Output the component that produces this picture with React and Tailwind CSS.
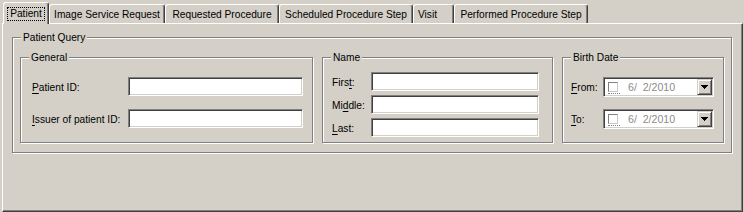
import React from "react";

function Group({ title, className, children }) {
  return (
    <div
      className={
        "relative border border-[#808080] shadow-[1px_1px_0_#ffffff,inset_1px_1px_0_#ffffff] " +
        className
      }
    >
      <span className="absolute left-[8px] top-[-6px] bg-[#d4d0c8] px-[2px] leading-[12px] whitespace-nowrap">
        {title}
      </span>
      {children}
    </div>
  );
}

function TextBox({ className }) {
  return (
    <div
      className={
        "bg-white border border-t-[#808080] border-l-[#808080] border-r-white border-b-white shadow-[inset_1px_1px_0_#404040,inset_-1px_-1px_0_#d4d0c8] " +
        className
      }
    />
  );
}

function Label({ pre, u, post }) {
  return (
    <span className="whitespace-nowrap leading-[12px] pt-[2px]">
      {pre}
      <span className="underline underline-offset-[2px]">{u}</span>
      {post}
    </span>
  );
}

function DatePicker() {
  return (
    <div className="h-[20px] w-[111px] bg-white border border-t-[#808080] border-l-[#808080] border-r-white border-b-white shadow-[inset_1px_1px_0_#404040,inset_-1px_-1px_0_#d4d0c8] flex items-center pl-[4px] pr-[1px] py-[1px]">
      <div className="flex flex-col items-start mt-[1px]">
        <div className="w-[10px] h-[10px] border border-t-[#808080] border-l-[#808080] border-r-[#c8c8c8] border-b-[#c8c8c8]" />
        <div className="w-[12px] h-0 border-b border-dotted border-[#808080] mt-[1px]" />
      </div>
      <span className="ml-[8px] text-[#8c8c8c] whitespace-pre leading-[12px] text-[10.6px]">{"6/  2/2010"}</span>
      <div className="ml-auto h-[16px] w-[15px] bg-[#d4d0c8] border border-t-[#d4d0c8] border-l-[#d4d0c8] border-r-[#404040] border-b-[#404040] shadow-[inset_1px_1px_0_#ffffff,inset_-1px_-1px_0_#808080] flex items-center justify-center">
        <svg width="7" height="4" viewBox="0 0 7 4" shapeRendering="crispEdges">
          <polygon points="0,0 7,0 3.5,4" fill="#000" />
        </svg>
      </div>
    </div>
  );
}

const tabs = [
  { label: "Image Service Request", w: "w-[116px] justify-center" },
  { label: "Requested Procedure", w: "w-[114px] justify-center" },
  { label: "Scheduled Procedure Step", w: "w-[134px] justify-center" },
  { label: "Visit", w: "w-[41px] justify-start pl-[4px]" },
  { label: "Performed Procedure Step", w: "w-[134px] justify-center" },
];

export default function App() {
  return (
    <div className="w-[744px] h-[212px] bg-[#d4d0c8] overflow-hidden text-black font-['Liberation_Sans',Arial,sans-serif] text-[10.2px]">
      {/* Tab strip */}
      <div className="flex items-end h-[23px] pl-[3px]">
        <div className="relative z-10 -mb-[1px] h-[22px] w-[46px] bg-[#d4d0c8] border-l border-t border-l-white border-t-white border-r border-r-[#404040] shadow-[inset_-1px_0_0_#808080] rounded-t-[3px] flex items-start justify-center pt-[5px]">
          <span className="outline outline-1 outline-dotted outline-black px-[2px] leading-[12px]">
            Patient
          </span>
        </div>
        {tabs.map((t) => (
          <div
            key={t.label}
            className={
              "h-[19px] bg-[#d4d0c8] border-l border-t border-l-white border-t-white border-r border-r-[#404040] shadow-[inset_-1px_0_0_#808080] rounded-t-[3px] flex items-center whitespace-nowrap leading-[12px] pt-[2px] " +
              t.w
            }
          >
            {t.label}
          </div>
        ))}
      </div>

      {/* Tab panel */}
      <div className="ml-[2px] w-[741px] h-[189px] border border-l-white border-t-white border-r-[#404040] border-b-[#404040] shadow-[inset_-1px_-1px_0_#808080]">
        <Group title="Patient Query" className="ml-[9px] mt-[13px] w-[720px] h-[116px]">
          <div className="flex pt-[19px] pl-[7px] gap-[9px]">
            <Group title="General" className="w-[293px] h-[86px]">
              <div className="grid grid-cols-[96px_175px] auto-rows-[19px] gap-y-[13px] items-center pl-[11px] pt-[19px]">
                <Label u="P" post="atient ID:" />
                <TextBox className="h-[19px] w-[175px]" />
                <Label u="I" post="ssuer of patient ID:" />
                <TextBox className="h-[19px] w-[175px]" />
              </div>
            </Group>
            <Group title="Name" className="w-[231px] h-[86px]">
              <div className="grid grid-cols-[39px_168px] auto-rows-[19px] gap-y-[4px] items-center pl-[9px] pt-[14px]">
                <Label pre="Firs" u="t" post=":" />
                <TextBox className="h-[19px] w-[168px]" />
                <Label pre="Mi" u="d" post="dle:" />
                <TextBox className="h-[19px] w-[168px]" />
                <Label u="L" post="ast:" />
                <TextBox className="h-[19px] w-[168px]" />
              </div>
            </Group>
            <Group title="Birth Date" className="w-[162px] h-[86px]">
              <div className="grid grid-cols-[32px_111px] auto-rows-[20px] gap-y-[12px] items-center pl-[8px] pt-[19px]">
                <Label u="F" post="rom:" />
                <DatePicker />
                <Label u="T" post="o:" />
                <DatePicker />
              </div>
            </Group>
          </div>
        </Group>
      </div>
    </div>
  );
}
